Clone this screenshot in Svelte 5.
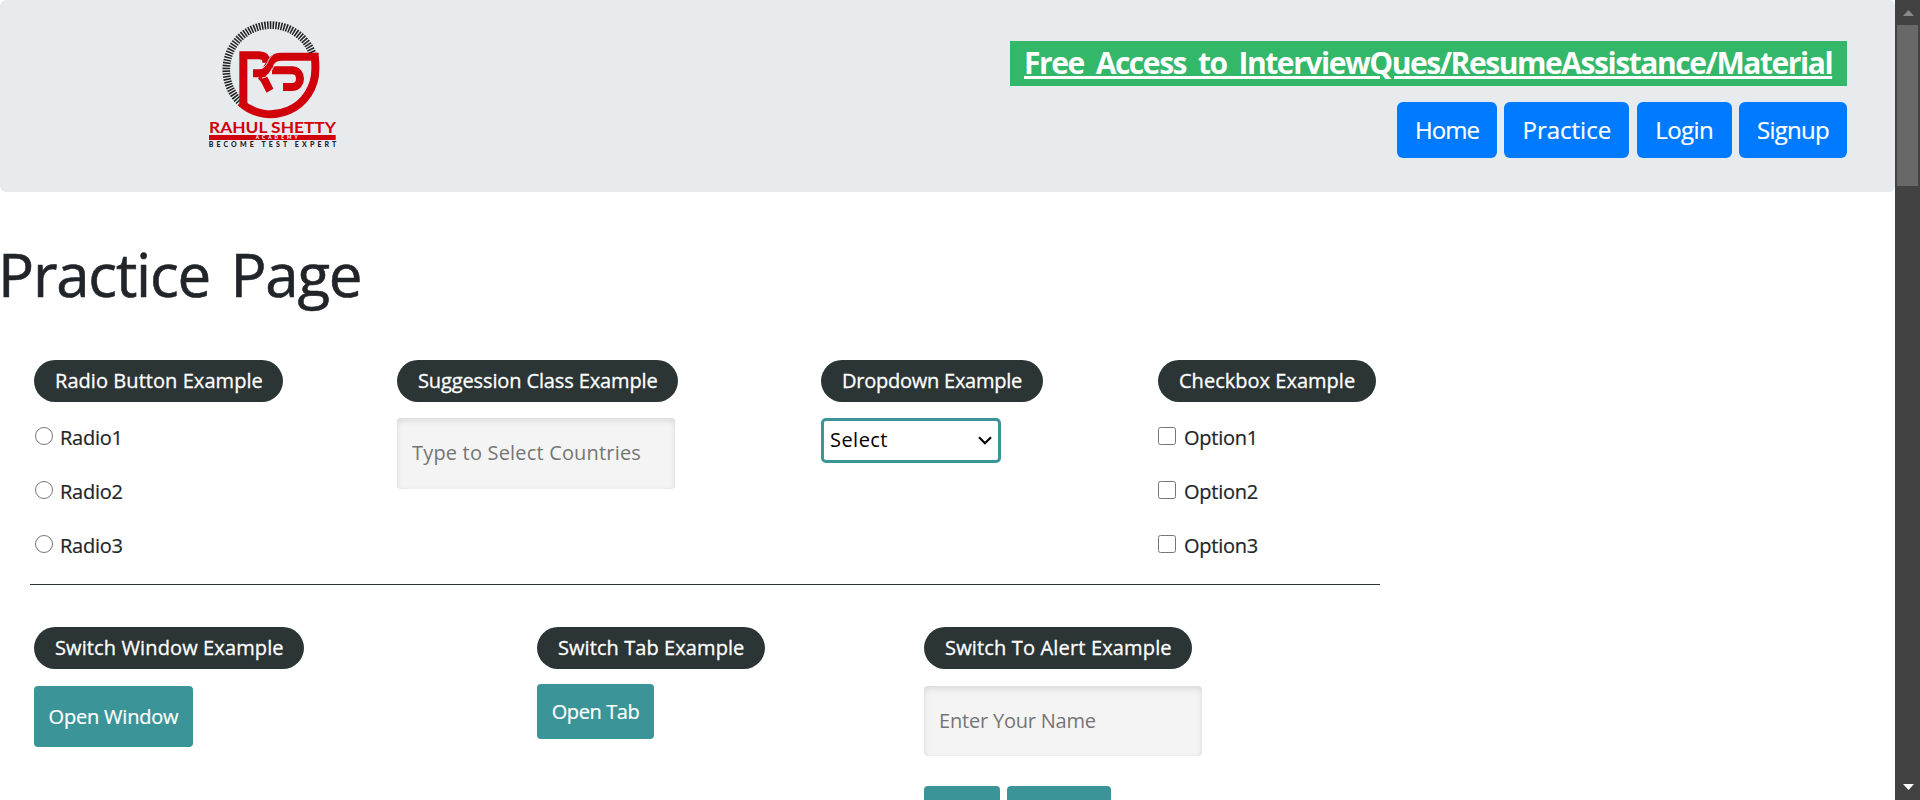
<script>
  const nav = [
    { label: 'Home', cls: 'home' },
    { label: 'Practice', cls: 'practice' },
    { label: 'Login', cls: 'login' },
    { label: 'Signup', cls: 'signup' }
  ];
  const numbers = [1, 2, 3];
</script>

<div class="viewport">
  <main class="page">
    <header>
      <a class="brand" href="#home" aria-label="Rahul Shetty Academy">
        <svg width="170" height="150" viewBox="0 0 510 450">
          <path d="M148 274 A134 134 0 1 1 370 137" fill="none" stroke="#202124" stroke-width="23" stroke-dasharray="4.6 3.6" />
          <g fill="none" stroke="#d0010b" stroke-width="24">
            <path d="M160 290 V136 H204 C224 136 229 143 229 158" />
            <path d="M374 140 Q377 162 376 178 A134 134 0 0 1 151 277" />
            <path d="M386 140 H274 C226 140 246 189 207 190 H189" />
            <path d="M246 181 H306 C338 181 338 231 306 231 H279" />
            <path d="M209 196 C224 202 226 218 240 242" />
          </g>
          <path d="M250 133 C230 146 236 171 211 176" fill="none" stroke="#e8ebee" stroke-width="3" />
          <path d="M216 204 C237 202 243 184 252 168" fill="none" stroke="#e8ebee" stroke-width="3" />
          <text x="57" y="368" class="name" textLength="381" lengthAdjust="spacingAndGlyphs">RAHUL SHETTY</text>
          <rect x="57" y="375" width="380" height="15" fill="#d0010b" />
          <text x="197" y="388" class="academy" textLength="126">ACADEMY</text>
          <text x="56" y="410" class="motto" textLength="383">BECOME TEST EXPERT</text>
        </svg>
      </a>
      <div class="links">
        <a class="banner" href="#material">Free Access to InterviewQues/ResumeAssistance/Material</a>
        <nav>
          {#each nav as item}
            <button class={item.cls}>{item.label}</button>
          {/each}
        </nav>
      </div>
    </header>

    <h1>Practice Page</h1>

    <div class="examples">
      <section class="row first">
        <fieldset>
          <legend class="radio-l">Radio Button Example</legend>
          {#each numbers as n}
            <label><input type="radio" name="radio" /><span>Radio{n}</span></label>
          {/each}
        </fieldset>
        <fieldset>
          <legend class="suggest-l">Suggession Class Example</legend>
          <input class="text" type="text" placeholder="Type to Select Countries" />
        </fieldset>
        <fieldset>
          <legend class="drop-l">Dropdown Example</legend>
          <div class="select" role="combobox" aria-expanded="false" aria-controls="none" tabindex="0">
            <span>Select</span>
            <svg width="14" height="9" viewBox="0 0 14 9"><path d="M1 1.3 L7 7.2 L13 1.3" fill="none" stroke="#000" stroke-width="2.2" /></svg>
          </div>
        </fieldset>
        <fieldset>
          <legend class="check-l">Checkbox Example</legend>
          {#each numbers as n}
            <label><input type="checkbox" /><span>Option{n}</span></label>
          {/each}
        </fieldset>
      </section>

      <section class="row second">
        <fieldset>
          <legend class="window-l">Switch Window Example</legend>
          <button class="action window">Open Window</button>
        </fieldset>
        <fieldset>
          <legend class="tab-l">Switch Tab Example</legend>
          <button class="action tab">Open Tab</button>
        </fieldset>
        <fieldset>
          <legend class="alert-l">Switch To Alert Example</legend>
          <input class="text name-field" type="text" placeholder="Enter Your Name" />
          <div class="pair">
            <button class="action alert" aria-label="Alert"></button>
            <button class="action confirm" aria-label="Confirm"></button>
          </div>
        </fieldset>
      </section>
    </div>
  </main>

  <div class="scrollbar">
    <svg class="arrow" width="11" height="6" viewBox="0 0 11 6"><path d="M0 6 L5.5 0 L11 6 Z" fill="#888" /></svg>
    <div class="thumb"></div>
    <svg class="arrow down" width="11" height="6" viewBox="0 0 11 6"><path d="M0 0 L5.5 6 L11 0 Z" fill="#fff" /></svg>
  </div>
</div>

<style>
  :global(body) { margin: 0; background: #fff; overflow: hidden; }
  * { box-sizing: border-box; }
  .viewport {
    display: flex;
    height: 800px;
    overflow: hidden;
    font-family: "Trebuchet MS", "Open Sans", sans-serif;
    font-size: 20px;
    line-height: 30px;
    color: #212529;
  }
  .page { width: 1895px; height: 800px; overflow: hidden; }
  header {
    display: flex;
    justify-content: space-between;
    height: 192px;
    padding: 10px 48px 0 190px;
    background: #e8ebee;
    border-radius: 6px;
  }
  .brand { height: 150px; }
  .name { font: 700 46px Lato, sans-serif; fill: #d0010b; }
  .academy { font: 900 14px Lato, sans-serif; fill: #fff; }
  .motto { font: 900 21px Lato, sans-serif; fill: #202124; }
  .links { display: flex; flex-direction: column; align-items: flex-end; padding-top: 31px; }
  .banner {
    width: 837px;
    height: 45px;
    padding-left: 14px;
    background: #33b768;
    color: #fff;
    font-size: 30px;
    font-weight: 700;
    line-height: 44px;
    letter-spacing: -0.048em;
    word-spacing: 5.5px;
    white-space: nowrap;
    text-decoration: underline;
    text-decoration-thickness: 3px;
    text-underline-offset: 2px;
  }
  nav { display: flex; justify-content: space-between; width: 450px; margin-top: 16px; }
  button {
    border: 0;
    padding: 0;
    color: #fff;
    font-family: inherit;
    white-space: nowrap;
  }
  nav button {
    height: 56px;
    padding: 0 0 1px;
    border-radius: 6px;
    background: #007bff;
    font-size: 24px;
    -webkit-text-stroke: 0.2px #fff;
  }
  nav .home { width: 100px; letter-spacing: -0.04em; }
  nav .practice { width: 125px; letter-spacing: 0; }
  nav .login { width: 95px; letter-spacing: -0.024em; }
  nav .signup { width: 108px; letter-spacing: -0.03em; }
  h1 {
    margin: 0;
    padding-top: 49px;
    height: 168px;
    font-size: 60px;
    font-weight: 400;
    line-height: 67px;
    letter-spacing: -0.02em;
    word-spacing: 6px;
    text-indent: -2px;
    -webkit-text-stroke: 0.6px #212529;
  }
  .examples { width: 1350px; margin-left: 30px; }
  .row { display: grid; padding-left: 4px; }
  .first { grid-template-columns: 363px 424px 337px 222px; height: 225px; border-bottom: 1px solid #2b3535; }
  .second { grid-template-columns: 503px 387px 456px; padding-top: 42px; }
  fieldset { border: 0; margin: 0; padding: 0; min-width: 0; }
  legend {
    display: block;
    height: 42px;
    padding: 0 0 0 21px;
    margin: 0 0 16px;
    border-radius: 21px;
    background: #2b3535;
    color: #fff;
    line-height: 41px;
    white-space: nowrap;
    -webkit-text-stroke: 0.3px #fff;
  }
  .radio-l { width: 249px; letter-spacing: 0.003em; }
  .suggest-l { width: 281px; letter-spacing: -0.006em; }
  .drop-l { width: 222px; letter-spacing: -0.012em; }
  .check-l { width: 218px; letter-spacing: 0.001em; }
  .window-l { width: 270px; letter-spacing: 0.006em; }
  .tab-l { width: 228px; letter-spacing: 0.004em; }
  .alert-l { width: 268px; letter-spacing: 0.008em; }
  label { display: flex; height: 54px; padding-top: 5px; letter-spacing: -0.012em; -webkit-text-stroke: 0.2px #212529; }
  label input { flex: none; width: 18px; height: 18px; margin: 4px 7px 0 1px; }
  input[type='checkbox'] { margin: 4px 8px 0 0; }
  .text {
    display: block;
    width: 278px;
    height: 71px;
    padding: 0 14px 2px 15px;
    border: 0;
    border-radius: 4px;
    background: #f4f4f4;
    box-shadow: inset 0 3px 6px rgba(0, 0, 0, 0.1), inset 0 0 2px rgba(0, 0, 0, 0.06);
    font: 20px "Trebuchet MS", "Open Sans", sans-serif;
    letter-spacing: 0.009em;
  }
  .text::placeholder { color: #757575; opacity: 1; }
  .name-field { height: 70px; letter-spacing: -0.01em; }
  .second .name-field { margin-top: 1px; }
  .select {
    display: flex;
    align-items: center;
    justify-content: space-between;
    width: 180px;
    height: 45px;
    padding: 0 6px 2px;
    border: 3px solid #3b9498;
    border-radius: 5px;
    color: #000;
    letter-spacing: 0.023em;
  }
  .select svg { margin-top: 1px; }
  .action {
    display: block;
    border-radius: 4px;
    background: #3b9498;
    font-size: 20px;
    letter-spacing: -0.01em;
    -webkit-text-stroke: 0.2px #fff;
  }
  .window { width: 159px; height: 61px; padding-bottom: 1px; }
  .second .window { margin-top: 1px; }
  .tab { width: 117px; height: 55px; letter-spacing: -0.02em; }
  .second .tab { margin-top: -1px; }
  .pair { display: flex; gap: 7px; margin-top: 30px; }
  .alert { width: 76px; height: 61px; }
  .confirm { width: 104px; height: 61px; }
  .scrollbar {
    display: flex;
    flex-direction: column;
    align-items: center;
    width: 25px;
    height: 800px;
    padding: 10px 0;
    background: #424242;
  }
  .arrow { flex: none; display: block; margin-left: 1px; }
  .thumb { width: 21px; height: 161px; margin-top: 9px; background: #686868; }
  .down { margin-top: auto; }
</style>
